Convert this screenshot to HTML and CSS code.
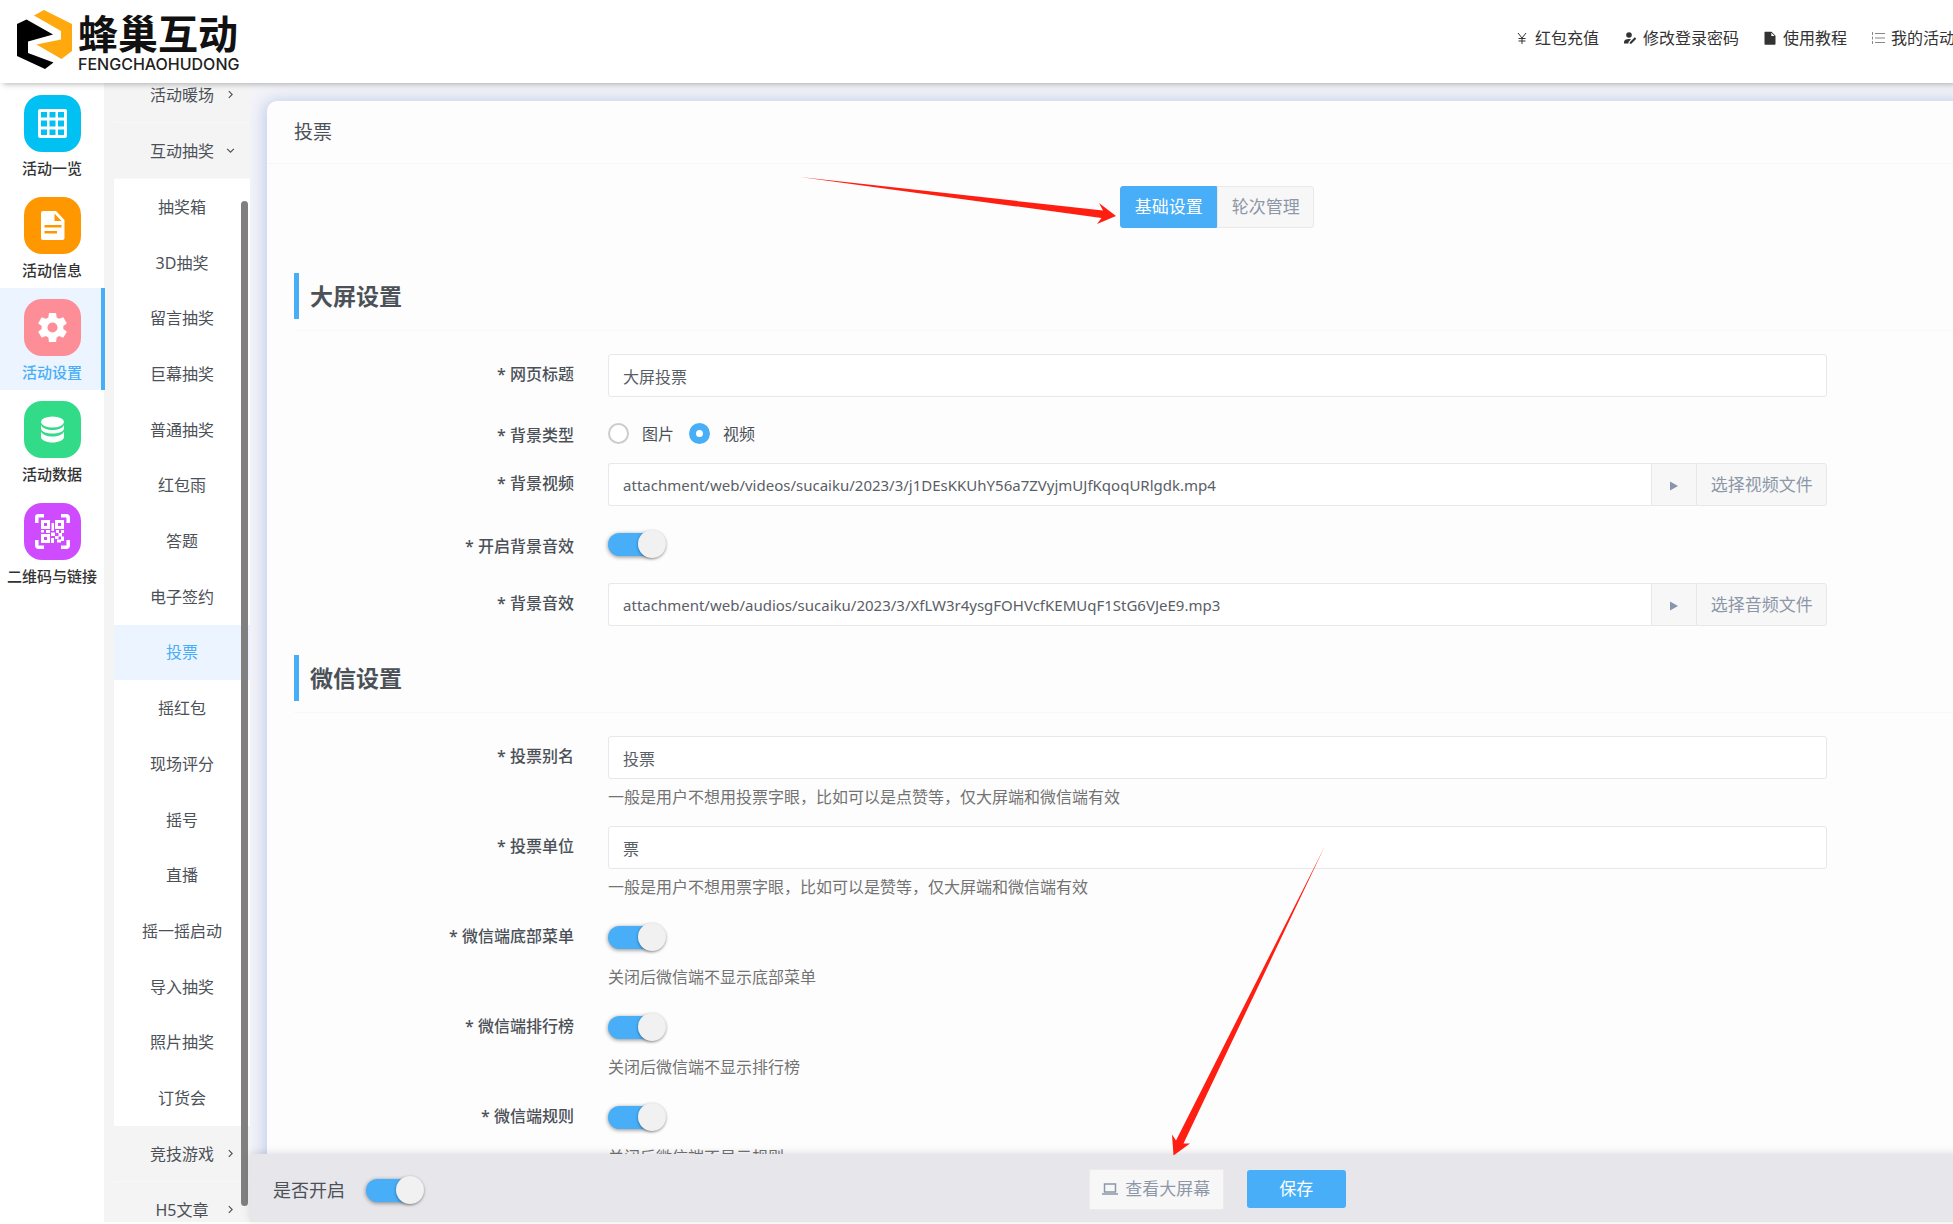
FILE: index.html
```html
<!DOCTYPE html>
<html lang="zh-CN">
<head>
<meta charset="utf-8">
<title>投票</title>
<link rel="stylesheet" href="styles.css">
</head>
<body>
<header class="topbar">
  <a class="brand" href="#">
    <svg class="brand-mark" viewBox="17 10 55 59" aria-hidden="true">
      <path fill="#000" d="M17 24 26.500 19.500 53 34.500 28 41.500V53L53.500 62.500 45 69 17 56Z"/>
      <path fill="#ffa90f" d="M34 15.500 44 10 72 24V51L61.500 59 36.500 44.500 61 39.500V31Z"/>
    </svg>
    <span class="brand-text"><strong>蜂巢互动</strong><span>FENGCHAOHUDONG</span></span>
  </a>
  <nav class="toplinks">
    <a href="#"><svg viewBox="0 0 14 14"><path d="M3 2l4 5 4-5M7 7v6M3.500 7.500h7M3.500 10h7" fill="none" stroke="#333"/></svg>红包充值</a>
    <a href="#"><svg viewBox="0 0 14 14"><circle cx="6" cy="4" r="2.800"/><path d="M1 12.500V11c0-2 2-3 5-3 .8 0 1.500.1 2 .3L5.500 11v1.500zM6.800 12.800v-1.500l5-5 1.500 1.500-5 5z"/></svg>修改登录密码</a>
    <a href="#"><svg viewBox="0 0 14 14"><path d="M2 .8h6.500l4 4V13a.8.8 0 0 1-.8.8H2.300a.8.8 0 0 1-.8-.8V1.300zM8.300 1.800v3.300h3.300z" fill-rule="evenodd"/></svg>使用教程</a>
    <a href="#"><svg viewBox="0 0 14 14"><path d="M4 2.500h10M4 7h10M4 11.500h10" stroke="#888" stroke-width="1.200"/><path d="M1.500 1v3M1.500 5.500v3M1.500 10v3" stroke="#888"/></svg>我的活动</a>
  </nav>
</header>

<div class="shell">
  <nav class="modules">
    <a href="#"><span class="tile cyan"><svg viewBox="0 0 29 29"><path fill-rule="evenodd" d="M2 0h25a2 2 0 0 1 2 2v25a2 2 0 0 1-2 2H2a2 2 0 0 1-2-2V2a2 2 0 0 1 2-2zM3 3v5.500h6V3zm8.500 0v5.500h6V3zM20 3v5.500h6V3zM3 11.500v6h6v-6zm8.500 0v6h6v-6zm8.500 0v6h6v-6zM3 20.500V26h6v-5.500zm8.500 0V26h6v-5.500zm8.500 0V26h6v-5.500z"/></svg></span>活动一览</a>
    <a href="#"><span class="tile orange"><svg viewBox="0 0 29 29"><path fill-rule="evenodd" d="M5 0h13l8.500 9v18a2 2 0 0 1-2 2H5a2 2 0 0 1-2-2V2a2 2 0 0 1 2-2zm11.500 2.500V10h7zM6.500 14v2.500h17V14zm0 6v2.500H19V20z"/></svg></span>活动信息</a>
    <a href="#" class="active"><span class="tile pink"><svg viewBox="2 2 20 20"><path d="M12,15.500A3.500,3.500 0 0,1 8.500,12A3.500,3.500 0 0,1 12,8.500A3.500,3.500 0 0,1 15.500,12A3.500,3.500 0 0,1 12,15.500M19.430,12.970C19.470,12.650 19.500,12.330 19.500,12C19.500,11.670 19.470,11.340 19.430,11L21.540,9.370C21.730,9.220 21.780,8.950 21.660,8.730L19.660,5.270C19.540,5.050 19.270,4.960 19.050,5.050L16.560,6.050C16.040,5.660 15.500,5.320 14.870,5.070L14.500,2.420C14.460,2.180 14.250,2 14,2H10C9.750,2 9.540,2.180 9.500,2.420L9.130,5.070C8.500,5.320 7.960,5.660 7.440,6.050L4.950,5.050C4.730,4.960 4.460,5.050 4.340,5.270L2.340,8.730C2.210,8.950 2.270,9.220 2.460,9.370L4.570,11C4.530,11.340 4.500,11.670 4.500,12C4.500,12.330 4.530,12.650 4.570,12.970L2.460,14.630C2.270,14.780 2.210,15.050 2.340,15.270L4.340,18.730C4.460,18.950 4.730,19.030 4.950,18.950L7.440,17.940C7.960,18.340 8.500,18.680 9.130,18.930L9.500,21.580C9.540,21.820 9.750,22 10,22H14C14.250,22 14.460,21.820 14.500,21.580L14.870,18.930C15.500,18.670 16.040,18.340 16.560,17.940L19.050,18.950C19.270,19.030 19.540,18.950 19.660,18.730L21.660,15.270C21.780,15.050 21.730,14.780 21.540,14.630L19.430,12.970Z"/></svg></span>活动设置</a>
    <a href="#"><span class="tile green"><svg viewBox="0 0 29 29"><ellipse cx="14.500" cy="7" rx="11.500" ry="5.500"/><path d="M3 10c1.500 3.500 6 5 11.500 5S24.500 13.500 26 10v3.500c0 3-5.500 5-11.500 5S3 16.500 3 13.500zM3 16.500c1.500 3.500 6 5 11.500 5s10-1.500 11.500-5v5.500c0 3-5.500 5.500-11.500 5.500S3 25 3 22z"/></svg></span>活动数据</a>
    <a href="#"><span class="tile purple"><svg class="wide" viewBox="0 0 35 35"><path d="M1.800 9V3.300a1.500 1.500 0 0 1 1.500-1.500H9M26 1.800h5.700a1.500 1.500 0 0 1 1.500 1.500V9M33.200 26v5.700a1.500 1.500 0 0 1-1.500 1.500H26M9 33.200H3.300a1.500 1.500 0 0 1-1.500-1.500V26" fill="none" stroke="#fff" stroke-width="3.500"/><path fill-rule="evenodd" d="M6 6h9v9H6zm3 3v3h3V9zM20 6h9v9h-9zm3 3v3h3V9zM6 20h9v9H6zm3 3v3h3v-3zM16.500 9H19v8h-2.500zM6 16h3v2.500H6zM11 16h4v3h-4zM16 18.500h4V22h-4zM21 16h3v3h-3zM26 16h3v3h-3zM23.500 19H27v3.500h-3.500zM20 22h3.500v3H20zM26 22.500h3V27h-3zM16 24h3v5h-3zM22 25.500h4v3h-4z"/></svg></span>二维码与链接</a>
  </nav>

  <nav class="submenu">
    <div class="menu-list">
      <a class="group" href="#">活动暖场<svg viewBox="0 0 8 8"><path d="M2.500 1l3 3-3 3"/></svg></a>
      <a class="group" href="#">互动抽奖<svg viewBox="0 0 8 8"><path d="M1 2.500l3 3 3-3"/></svg></a>
      <div class="children">
        <a href="#">抽奖箱</a><a href="#">3D抽奖</a><a href="#">留言抽奖</a><a href="#">巨幕抽奖</a><a href="#">普通抽奖</a><a href="#">红包雨</a><a href="#">答题</a><a href="#">电子签约</a><a href="#" class="active">投票</a><a href="#">摇红包</a><a href="#">现场评分</a><a href="#">摇号</a><a href="#">直播</a><a href="#">摇一摇启动</a><a href="#">导入抽奖</a><a href="#">照片抽奖</a><a href="#">订货会</a>
      </div>
      <a class="group" href="#">竞技游戏<svg viewBox="0 0 8 8"><path d="M2.500 1l3 3-3 3"/></svg></a>
      <a class="group" href="#">H5文章<svg viewBox="0 0 8 8"><path d="M2.500 1l3 3-3 3"/></svg></a>
    </div>
    <span class="scroll-thumb"></span>
  </nav>

  <main class="workspace">
    <div class="viewport">
      <section class="card">
        <h1>投票</h1>
        <form class="card-body">
          <div class="tabs">
            <button type="button" class="tab current">基础设置</button><button type="button" class="tab">轮次管理</button>
          </div>

          <h2><span>大屏设置</span></h2>
          <div class="rows">
            <div class="row">
              <label class="name" for="title">* 网页标题</label>
              <input class="text" id="title" type="text" value="大屏投票">
            </div>
            <div class="row choice-row">
              <span class="name">* 背景类型</span>
              <div class="choices">
                <label><input type="radio" name="bg">图片</label>
                <label><input type="radio" name="bg" checked>视频</label>
              </div>
            </div>
            <div class="row">
              <label class="name" for="video">* 背景视频</label>
              <div class="combo">
                <input class="text" id="video" type="text" value="attachment/web/videos/sucaiku/2023/3/j1DEsKKUhY56a7ZVyjmUJfKqoqURlgdk.mp4">
                <button type="button" class="play" aria-label="播放"><svg viewBox="0 0 8 10"><path d="M0 0.500 8 5 0 9.500z"/></svg></button>
                <button type="button">选择视频文件</button>
              </div>
            </div>
            <div class="row">
              <label class="name" for="sound-on">* 开启背景音效</label>
              <div class="toggle"><input class="switch" id="sound-on" type="checkbox" checked></div>
            </div>
            <div class="row">
              <label class="name" for="audio">* 背景音效</label>
              <div class="combo">
                <input class="text" id="audio" type="text" value="attachment/web/audios/sucaiku/2023/3/XfLW3r4ysgFOHVcfKEMUqF1StG6VJeE9.mp3">
                <button type="button" class="play" aria-label="播放"><svg viewBox="0 0 8 10"><path d="M0 0.500 8 5 0 9.500z"/></svg></button>
                <button type="button">选择音频文件</button>
              </div>
            </div>
          </div>

          <h2><span>微信设置</span></h2>
          <div class="rows">
            <div class="row">
              <label class="name" for="alias">* 投票别名</label>
              <div><input class="text" id="alias" type="text" value="投票"><p class="hint">一般是用户不想用投票字眼，比如可以是点赞等，仅大屏端和微信端有效</p></div>
            </div>
            <div class="row">
              <label class="name" for="unit">* 投票单位</label>
              <div><input class="text" id="unit" type="text" value="票"><p class="hint">一般是用户不想用票字眼，比如可以是赞等，仅大屏端和微信端有效</p></div>
            </div>
            <div class="row">
              <label class="name" for="menu-on">* 微信端底部菜单</label>
              <div><div class="toggle tall"><input class="switch" id="menu-on" type="checkbox" checked></div><p class="hint">关闭后微信端不显示底部菜单</p></div>
            </div>
            <div class="row">
              <label class="name" for="rank-on">* 微信端排行榜</label>
              <div><div class="toggle tall"><input class="switch" id="rank-on" type="checkbox" checked></div><p class="hint">关闭后微信端不显示排行榜</p></div>
            </div>
            <div class="row">
              <label class="name" for="rule-on">* 微信端规则</label>
              <div><div class="toggle tall"><input class="switch" id="rule-on" type="checkbox" checked></div><p class="hint">关闭后微信端不显示规则</p></div>
            </div>
          </div>
        </form>
      </section>
    </div>
    <footer class="actions">
      <div class="enable"><label for="enabled">是否开启</label><input class="switch" id="enabled" type="checkbox" checked></div>
      <div class="buttons">
        <button type="button" class="preview"><svg viewBox="0 0 16 12"><path d="M2.500 1h11v8h-11zM0 11h16" fill="none" stroke="currentColor" stroke-width="1.500"/></svg>查看大屏幕</button>
        <button type="submit" class="save">保存</button>
      </div>
    </footer>
  </main>
</div>

<svg class="arrow arrow-tab" viewBox="0 0 316 48" aria-hidden="true"><path d="M0 0 303 33.500 299 26 316 39 297 47 301.500 41Z"/></svg>
<svg class="arrow arrow-preview" viewBox="0 0 154 309" aria-hidden="true"><path d="M153.500 0 12.500 296.500 19 296.500 2.500 308.500 1 287.500 5 293.500Z"/></svg>
</body>
</html>
```
FILE: styles.css
```css
* { box-sizing: border-box; }

body {
  margin: 0;
  height: 100vh;
  display: flex;
  flex-direction: column;
  position: relative;
  overflow: hidden;
  padding-bottom: 2px;
  background: #fff;
  color: #4c5158;
  font: 16px/20px "Noto Sans", "Noto Sans CJK SC", sans-serif;
}

a { color: inherit; text-decoration: none; }
button, input { font: inherit; margin: 0; }

/* top bar */
.topbar {
  flex: none;
  height: 83px;
  display: flex;
  justify-content: space-between;
  padding-left: 17px;
  background: #fff;
  box-shadow: 3px 1px 6px rgba(0, 0, 0, .3);
  position: relative;
  z-index: 2;
}
.brand { display: flex; gap: 6px; padding-top: 10px; color: #111; }
.brand-mark { width: 55px; height: 59px; }
.brand-text { display: flex; flex-direction: column; }
.brand-text strong { font: 700 40px/44px "Noto Sans CJK SC", sans-serif; }
.brand-text span { font: 500 16px/20px Inter, sans-serif; color: #222; }
.toplinks { display: flex; gap: 24px; height: 76px; margin-right: -2px; align-items: center; color: #333; white-space: nowrap; }
.toplinks a { display: flex; align-items: center; gap: 6px; }
.toplinks svg { width: 14px; height: 14px; fill: #333; }

.shell { flex: 1; min-height: 0; width: 112%; display: flex; background: #f4f4f4; }

/* module rail */
.modules { flex: none; width: 105px; margin-right: 9px; padding-top: 1px; background: linear-gradient(to right, #fff 104px, #f4f4f4 104px); font-size: 15px; font-weight: 500; color: #333; }
.modules a { display: flex; flex-direction: column; align-items: center; height: 102px; padding: 11px 1px 0 0; gap: 6px; white-space: nowrap; }
.modules a.active { background: #ecf5ff; box-shadow: inset -4px 0 #47aef7; color: #47aef7; }
.tile { width: 57px; height: 57px; border-radius: 18px; display: grid; place-items: center; }
.tile svg { width: 29px; height: 29px; fill: #fff; }
.tile svg.wide { width: 35px; height: 35px; }
.cyan { background: #00c1f1; }
.orange { background: #ff9800; }
.pink { background: #fd8e98; }
.green { background: #32db88; }
.purple { background: #cf4bff; }

/* sub menu, scrolled a little way down */
.submenu { flex: none; width: 136px; position: relative; overflow: hidden; }
.menu-list { margin-top: -16px; }
.submenu a { display: flex; align-items: center; justify-content: center; position: relative; }
.group { height: 56px; background: #f4f4f4; border-bottom: 1px solid #f8f8f8; }
.group svg { position: absolute; right: 15px; width: 9px; height: 9px; fill: none; stroke: #4c5158; }
.children { display: grid; grid-auto-rows: 1fr; height: 947px; background: #fff; }
.children .active { background: #ecf5ff; color: #47aef7; }
.scroll-thumb { position: absolute; top: 118px; bottom: 16px; right: 2px; width: 7px; border-radius: 4px; background: #808080; }

/* workspace */
.workspace { flex: 1; min-width: 0; display: flex; flex-direction: column; background: #f3f3f8; }
.viewport { flex: 1; min-height: 0; overflow: hidden; padding: 18px 20px 0 17px; }
.card { background: #fdfdfd; border-radius: 10px; box-shadow: -2px 0 16px rgba(90, 130, 210, .36); }
.card h1 { margin: 0; padding: 0 27px; border-bottom: 1px solid #f6f6f6; font-size: 19px; font-weight: 400; line-height: 62px; }
.card-body { padding: 22px 27px; }
.tabs { display: flex; justify-content: center; margin-bottom: 45px; }
.tab { width: 97px; height: 42px; padding: 0; border: 1px solid #ebe8ea; background: #f7f7f7; color: #8d97a8; font-size: 17px; border-radius: 0 3px 3px 0; }
.tab.current { background: #47aef7; border-color: #47aef7; color: #fff; border-radius: 3px 0 0 3px; }
h2 { margin: 0 0 23px; padding-bottom: 11px; border-bottom: 1px solid #f8f8f8; font-size: 23px; }
h2 span { display: block; border-left: 5px solid #47aef7; padding-left: 11px; line-height: 46px; }
.rows { display: flex; flex-direction: column; gap: 20px; margin-bottom: 29px; }
.row { display: grid; grid-template-columns: 280fr 1219fr 279fr; column-gap: 34px; align-items: start; }
.name { padding-top: 10px; text-align: right; font-weight: 500; }
.choice-row { margin-bottom: -2px; }
.choice-row .name { padding-top: 8px; }
.text { display: block; width: 100%; height: 43px; padding: 0 14px; border: 1px solid #e8e8ec; border-radius: 3px; background: #fff; color: #5a5e66; outline: 0; }
.choices { display: flex; gap: 15px; padding-top: 5px; }
.choices label { display: flex; align-items: center; gap: 13px; height: 23px; }
.choices input { appearance: none; width: 21px; height: 21px; border: 2px solid #ccc; border-radius: 50%; background: #fff; }
.choices input:checked { border: 7px solid #47aef7; }
.combo { display: flex; }
.combo .text { flex: 1; width: auto; min-width: 0; border-radius: 3px 0 0 3px; border-right: 0; font-size: 15px; }
.combo button { height: 43px; width: 131px; padding: 0; border: 1px solid #ebe6e8; border-radius: 0 3px 3px 0; background: #f7f7f7; color: #8d97a8; font-size: 17px; white-space: nowrap; }
.combo .play { width: 45px; border-right: 0; border-radius: 0; }
.play svg { width: 8px; height: 10px; fill: #8796aa; }
.toggle { display: flex; align-items: center; height: 37px; }
.toggle.tall { height: 43px; }
.switch { appearance: none; position: relative; flex: none; width: 52px; height: 23px; border-radius: 12px; background: #47aef7; box-shadow: 0 1px 4px rgba(0, 0, 0, .45); }
.switch::after { content: ""; position: absolute; right: -6px; top: -3px; width: 28px; height: 28px; border-radius: 50%; background: #f1f1f1; box-shadow: 0 1px 3px rgba(0, 0, 0, .4); }
.hint { margin: 10px 0 0; line-height: 17px; color: #737373; }

/* bottom action bar */
.actions { flex: none; height: 68px; display: grid; grid-template-columns: 1fr auto 1fr; align-items: center; padding: 2px 26px 0 23px; background: #e6e6eb; box-shadow: 0 -1px 8px rgba(0, 0, 0, .12); position: relative; }
.enable { display: flex; align-items: center; gap: 21px; font-size: 18px; padding-top: 2px; }
.buttons { display: flex; align-items: center; gap: 23px; }
.buttons button { font-size: 17px; }
.preview { display: flex; align-items: center; justify-content: center; gap: 7px; width: 135px; height: 41px; padding: 0; border: 1px solid #efe9eb; background: #f7f7f7; color: #8d97a8; white-space: nowrap; }
.preview svg { width: 16px; height: 12px; }
.save { width: 99px; height: 38px; border: 0; border-radius: 3px; background: #47aef7; color: #fff; }

/* pointer annotations laid over the page */
.arrow { position: absolute; z-index: 3; fill: #ff1f12; pointer-events: none; }
.arrow-tab { left: 800px; top: 177px; width: 316px; height: 48px; }
.arrow-preview { left: 1171px; top: 847px; width: 154px; height: 309px; }
```
